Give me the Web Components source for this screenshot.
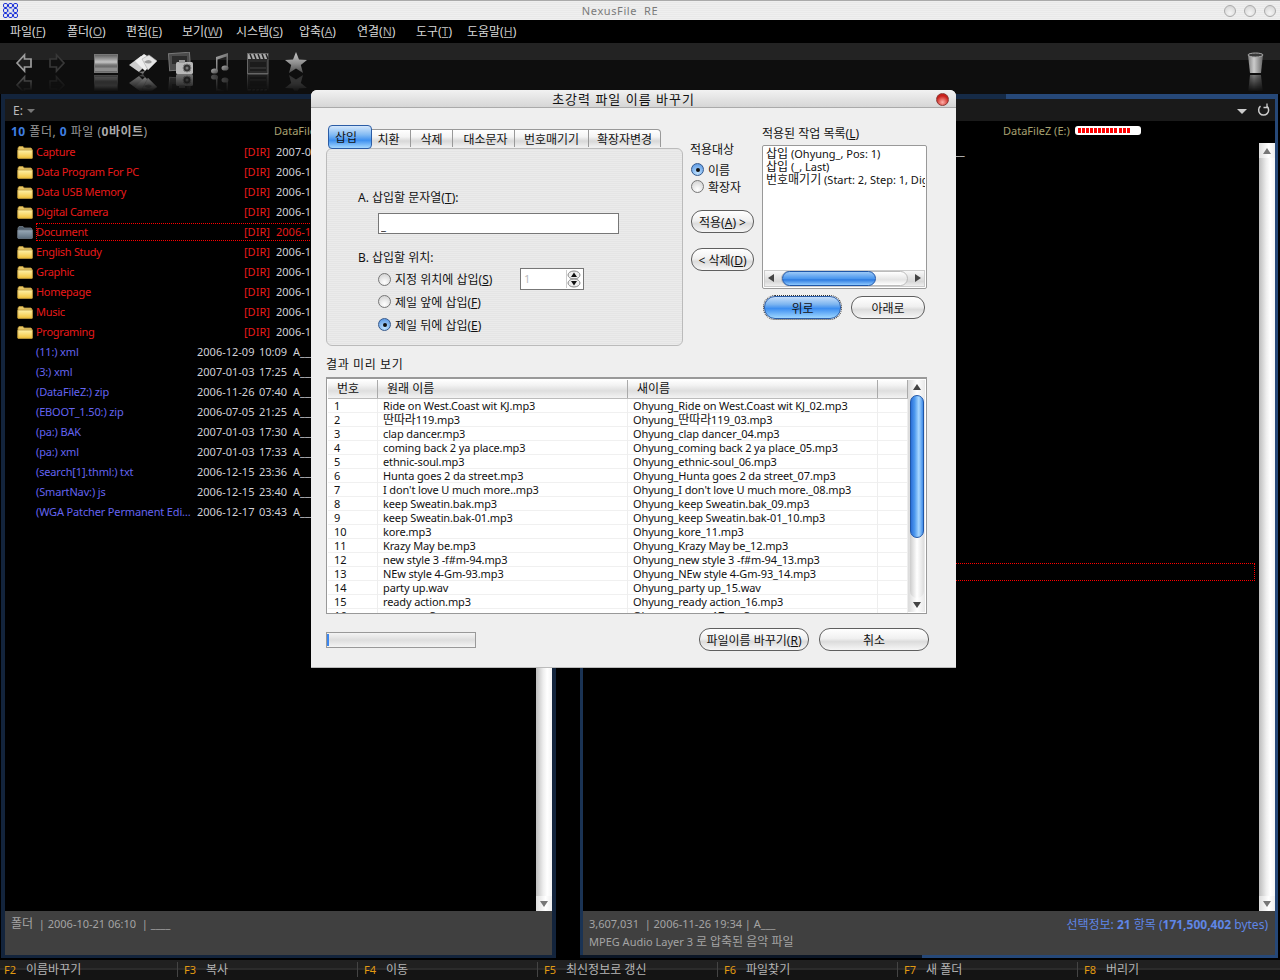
<!DOCTYPE html>
<html lang="ko"><head><meta charset="utf-8"><title>NexusFile RE</title>
<style>
html,body{margin:0;padding:0;background:#000;height:980px;overflow:hidden}
body{font:11px/14px "Noto Sans","Noto Sans CJK KR",sans-serif;position:relative;display:flex;flex-direction:column;width:1280px}
</style></head><body>
<x-titlebar>NexusFile  RE</x-titlebar>
<x-menubar></x-menubar>
<x-toolbar></x-toolbar>
<x-panes></x-panes>
<x-fnbar></x-fnbar>
<x-rename-dialog></x-rename-dialog>
<script>
const FONT='"Noto Sans","Noto Sans CJK KR",sans-serif';
function def(name,css,html,init){
  customElements.define(name,class extends HTMLElement{
    connectedCallback(){
      if(this.shadowRoot)return;
      const r=this.attachShadow({mode:'open'});
      r.innerHTML='<style>'+css+'</style>'+(typeof html==='function'?html(this):html);
      if(init)init(this,r);
    }
  });
}
/* ---------- title bar ---------- */
def('x-titlebar',`:host{display:flex;align-items:center;height:20px;box-sizing:border-box;border-top:1px solid #aaa;
 background:repeating-linear-gradient(0deg,#efefef 0 1px,#e9e9e9 1px 2px);color:#7a7a7a;font:11px "Noto Sans",sans-serif;letter-spacing:.6px;position:relative;padding:0 4px 0 3px}
 svg{display:block} .t{flex:1;text-align:center;padding-left:6px;white-space:pre}
 .b{width:10px;height:10px;border-radius:50%;border:1px solid #aaa;background:radial-gradient(circle at 50% 70%,#f5f5f5,#d0d0d0);margin-left:8px}`,
 ()=>`<svg width="15" height="15" viewBox="0 0 15 15" fill="none" stroke="#1a2fd8">${[0,5,10].map(x=>[0,5,10].map(y=>`<rect x="${x+.5}" y="${y+.5}" width="4" height="4" rx="1.4" ${x==5&&y==5?'stroke="#8fa0e8"':''}/>`).join('')).join('')}</svg>
 <span class="t"><slot></slot></span><i class="b"></i><i class="b"></i><i class="b"></i>`);
/* ---------- menu ---------- */
def('x-menubar',`:host{display:flex;height:23px;align-items:center;background:#000;color:#d8d8d8;padding-left:10px;font-size:12px;font-family:${FONT}}
 span{display:block;white-space:nowrap} u{color:#aaa}`,
 ()=>[['파일','F',57],['폴더','O',59],['편집','E',56],['보기','W',54],['시스템','S',63],['압축','A',58],['연결','N',59],['도구','T',51],['도움말','H',60]]
 .map(m=>`<span style="width:${m[2]}px">${m[0]}(<u>${m[1]}</u>)</span>`).join(''));
/* ---------- toolbar ---------- */
const ICONS={
 back:[18,`<path d="M2 11 L9.5 3 V7 H16 V15 H9.5 V19 Z" fill="#1c1c1c" stroke="#9c9c9c" stroke-width="1.7"/>`],
 fwd:[18,`<path d="M16 11 L8.5 3 V7 H2 V15 H8.5 V19 Z" fill="#111" stroke="#383838" stroke-width="1.7"/>`],
 card:[24,`<defs><linearGradient id="g" x1="0" y1="0" x2="0" y2="1"><stop offset="0" stop-color="#5c5c5c"/><stop offset=".42" stop-color="#c4c4c4"/><stop offset=".58" stop-color="#777"/><stop offset="1" stop-color="#444"/></linearGradient></defs><rect x=".5" y="2.5" width="23" height="18" fill="url(#g)" stroke="#777"/><rect x="1" y="15.5" width="22" height="4" fill="#8e8e8e"/>`],
 files:[30,`<path d="M1 13 L13 4 L22 9 L11 20 Z" fill="#ccc"/><path d="M7 9 L16 2 L27 9 L17 19 Z" fill="#eee"/><path d="M14 7 L21 3 L29 9 L20 18 Z" fill="#e4e4e4" stroke="#aaa" stroke-width=".6"/><path d="M16 10 Q21 6 24 10 Q21 13 16 10" fill="#999"/><path d="M11 20 L17 19 L15 22 Z" fill="#777"/>`],
 cam:[26,`<rect x="1" y="1" width="21" height="17" fill="#4d4d4d" stroke="#777" transform="rotate(-4 11 9)"/><rect x="4" y="4" width="15" height="8" fill="#2c2c2c"/><rect x="8" y="10" width="17" height="12" rx="1.5" fill="#b8b8b8"/><rect x="11" y="8" width="6" height="3" fill="#999"/><circle cx="19" cy="16" r="4" fill="#333" stroke="#888"/><circle cx="19" cy="16" r="1.5" fill="#777"/>`],
 music:[20,`<defs><linearGradient id="g" x1="0" y1="0" x2="1" y2="1"><stop offset="0" stop-color="#aaa"/><stop offset="1" stop-color="#484848"/></linearGradient></defs><path d="M6 5 L18 1 V16 H16.5 V4.5 L7.5 7.5 V19 H6 Z" fill="url(#g)"/><ellipse cx="4.5" cy="19" rx="3.5" ry="2.6" fill="url(#g)"/><ellipse cx="15" cy="16" rx="3.5" ry="2.6" fill="url(#g)"/>`],
 clap:[22,`<rect x=".5" y="1.5" width="20.5" height="20" fill="#2a2a2a" stroke="#666"/><path d="M1 2h20v5H1z" fill="#aaa"/><path d="M3 2l2 5M7 2l2 5M11 2l2 5M15 2l2 5M19 2l2 5" stroke="#222" stroke-width="1.5"/><rect x="3" y="10" width="16" height="9" fill="#1c1c1c"/><path d="M3 16h16" stroke="#444"/>`],
 star:[22,`<defs><linearGradient id="g" x1="0" y1="0" x2="0" y2="1"><stop offset="0" stop-color="#c8c8c8"/><stop offset=".55" stop-color="#8c8c8c"/><stop offset="1" stop-color="#4a4a4a"/></linearGradient></defs><path d="M11 0 L14 7.5 L22 8 L15.8 13 L18 21 L11 16.6 L4 21 L6.2 13 L0 8 L8 7.5 Z" fill="url(#g)"/>`],
 trash:[17,`<defs><linearGradient id="g" x1="0" y1="0" x2="1" y2="0"><stop offset="0" stop-color="#808080"/><stop offset=".4" stop-color="#ccc"/><stop offset="1" stop-color="#666"/></linearGradient></defs><path d="M1 3 L3 21 H14 L16 3 Z" fill="url(#g)"/><ellipse cx="8.5" cy="3" rx="7.5" ry="2" fill="#3a3a3a" stroke="#aaa"/>`]
};
def('x-tool',`:host{display:block;position:relative;height:40px;width:var(--w);flex:none}
 svg{display:block;position:absolute;left:0;top:0}
 svg.r{top:22px;transform:scaleY(-1);-webkit-mask-image:linear-gradient(0deg,rgba(0,0,0,.6),transparent 80%);mask-image:linear-gradient(0deg,rgba(0,0,0,.6),transparent 80%)}`,
 h=>{const k=ICONS[h.getAttribute('kind')];h.style.setProperty('--w',k[0]+'px');const s=`width="${k[0]}" height="22" viewBox="0 0 ${k[0]} 22"`;return `<svg ${s}>${k[1]}</svg><svg class="r" ${s}>${k[1]}</svg>`;});
def('x-toolbar',`:host{display:flex;height:51px;box-sizing:border-box;padding:9px 16px 0 15px;overflow:hidden;background:linear-gradient(180deg,#232323 0,#232323 17px,#0e0e0e 17px,#0e0e0e 100%)}
 .s{margin-left:auto}`,
 ()=>[['back',0],['fwd',15],['card',28],['files',10],['cam',10],['music',16],['clap',17],['star',16]].map(a=>`<x-tool kind="${a[0]}" style="margin-left:${a[1]}px"></x-tool>`).join('')+`<x-tool kind="trash" class="s"></x-tool>`);
/* ---------- small parts ---------- */
def('x-folder',`:host{display:block;width:16px;height:14px} svg{display:block}`,h=>{const g=h.hasAttribute('open');const a=g?'#9aaab8':'#fff2a8',b=g?'#5e7080':'#f2c23c',e=g?'#6d7a86':'#b8953a';
 return `<svg width="16" height="14" viewBox="0 0 16 14"><defs><linearGradient id="g" x1="0" y1="0" x2="0" y2="1"><stop offset="0" stop-color="${a}"/><stop offset="1" stop-color="${b}"/></linearGradient></defs><path d="M1 3 L2 1.5 H6 L7 3 H14 L15 4 V13 H1 Z" fill="${g?'#51606e':'#e7c766'}" stroke="${e}" stroke-width=".8"/><rect x=".8" y="5" width="14.6" height="8.4" rx=".5" fill="url(#g)" stroke="${e}" stroke-width=".8"/></svg>`});
def('x-vscroll',`:host{display:flex;flex-direction:column;justify-content:space-between;width:16px;flex:none;box-sizing:border-box;margin-top:1px;background:linear-gradient(90deg,#bcbcbc,#eeeeee 45%,#fff 70%,#f4f4f4)}
 b{display:flex;align-items:center;justify-content:center;height:15px;background:linear-gradient(90deg,#ddd,#fff 60%,#eee)} i{width:0;height:0;border:4px solid transparent;border-top:0;border-bottom:6px solid #777} b:last-child i{border-bottom:0;border-top:6px solid #777}`,
 `<b><i></i></b><b><i></i></b>`);
def('x-drive',`:host{display:flex;align-items:center;gap:5px;color:#a8a070;font:11px ${FONT};white-space:nowrap}
 .bar{width:66px;height:9px;box-sizing:border-box;background:#fff;border-radius:3px;padding:2px 3px}
 .f{height:5px;width:52px;background:repeating-linear-gradient(90deg,#f00 0 3px,#fff 3px 4.05px)}`,
 `<span><slot></slot></span><div class="bar"><div class="f"></div></div>`);
def('x-file-row',`:host{display:block;height:20px;position:relative}
 .r{display:grid;height:18px;align-items:center;white-space:nowrap;font:11px ${FONT};color:#d0d0d8;padding-left:12px;grid-template-columns:19px 208px 32px 1fr}
 .r.f{grid-template-columns:19px 161px 62px 34px 1fr}
 .n{color:#e81a1a;letter-spacing:-.3px} .f .n{color:#6464f0;grid-column:2;letter-spacing:-.15px} .d{color:#e81a1a} .foc .t{color:#e81a1a}
 x-folder{margin-top:2px}
 .o{position:absolute;left:31px;right:0;top:1px;height:16px;border:1px dotted #f00;border-right:0}`,
 h=>{const n=h.getAttribute('name'),t=h.getAttribute('date'),foc=h.hasAttribute('focus');
 if(h.hasAttribute('dir'))return `<div class="r ${foc?'foc':''}"><x-folder ${foc?'open':''}></x-folder><span class="n">${n}</span><span class="d">[DIR]</span><span class="t">${t}</span></div>${foc?'<div class="o"></div>':''}`;
 const p=t.split(' ');return `<div class="r f"><span></span><span class="n">${n}</span><span>${p[0]}</span><span>${p[1]}</span><span>A___</span></div>`;});
/* ---------- panes ---------- */
def('x-pane',`:host{display:flex;flex-direction:column;box-sizing:border-box;background:var(--b);position:relative}
 .h{height:22px;background:#1a1a1a;display:flex;align-items:center;color:#bbb;font:12px ${FONT};padding:0 5px 0 8px;flex:none}
 .i{height:21px;display:flex;align-items:center;justify-content:space-between;background:#000;flex:none;color:#999;font:11px ${FONT};padding:0 0 2px 6px;box-sizing:border-box}
 .m{flex:1;display:flex;background:#000;min-height:0;overflow:hidden}
 .l{flex:1;min-width:0;overflow:hidden;position:relative}
 .s{height:44px;flex:none;background:#404040;color:#a4a4a4;font:11px/18px ${FONT};padding:4px 7px 0 6px;box-sizing:border-box;white-space:nowrap}
 ::slotted([slot=list]){display:block}`,
 `<div class="h"><slot name="head"></slot></div><div class="i"><slot name="info"></slot></div><div class="m"><div class="l"><slot name="list"></slot></div><x-vscroll></x-vscroll></div><div class="s"><slot name="status"></slot></div>`);
def('x-panes',`:host{display:grid;grid-template-columns:555px 698px;column-gap:24px;padding-left:1px;height:864px;flex:none;font:11px ${FONT}}
 x-pane.a{--b:#13243c;padding:5px 4px 3px 4px}
 x-pane.b{--b:linear-gradient(90deg,#152a46 0,#152a46 61%,#264878 61%) top/100% 5px no-repeat,linear-gradient(90deg,#0b1626 0,#0b1626 49%,#264878 49%) bottom/100% 3px no-repeat,linear-gradient(90deg,#1a3354 0,#1a3354 1%,#264878 1%) center/100% 100% no-repeat;padding:5px 3px 3px 3px}
 .hd{display:flex;align-items:center;gap:4px;flex:1} .ar{width:0;height:0;border:4px solid transparent;border-bottom:0;border-top:4px solid #777;margin-top:2px}
 .ar.w{border-width:5px 5px 0;border-top-color:#ccc;border-bottom:0}
 .cnt b{color:#3f7fe0;font-family:"Noto Sans"} .cnt{color:#999;white-space:nowrap;font-size:12px;letter-spacing:.5px;flex:0 0 263px} .cnt .z{color:#aaa;font-weight:700}
 .bl{color:#5f86e6;float:right;font-size:12px;line-height:20px} .bl b{font-weight:700}
 .k{font-size:12px}
 .focR{position:absolute;left:0;right:4px;top:421px;height:16px;border:1px dotted #f00}
 .ul{position:absolute;left:360px;top:0;height:20px;line-height:18px;color:#ddd}`,
 ()=>`<x-pane class="a">
  <div slot="head" class="hd"><span>E:</span><i class="ar"></i></div>
  <div slot="info" style="display:flex;width:100%;align-items:center"><span class="cnt"><b>10</b> 폴더, <b>0</b> 파일 (<span class="z">0바이트</span>)</span><x-drive>DataFileZ (E:)</x-drive></div>
  <div slot="list">
  ${[['Capture','2007-01-03'],['Data Program For PC','2006-12-15'],['Data USB Memory','2006-12-09'],['Digital Camera','2006-12-01'],['Document','2006-10-21',1],['English Study','2006-10-18'],['Graphic','2006-10-12'],['Homepage','2006-12-17'],['Music','2006-12-05'],['Programing','2006-11-26']]
   .map(d=>`<x-file-row dir name="${d[0]}" date="${d[1]}" ${d[2]?'focus':''}></x-file-row>`).join('')}
  ${[['(11:) xml','2006-12-09 10:09'],['(3:) xml','2007-01-03 17:25'],['(DataFileZ:) zip','2006-11-26 07:40'],['(EBOOT_1.50:) zip','2006-07-05 21:25'],['(pa:) BAK','2007-01-03 17:30'],['(pa:) xml','2007-01-03 17:33'],['(search[1].thml:) txt','2006-12-15 23:36'],['(SmartNav:) js','2006-12-15 23:40'],['(WGA Patcher Permanent Edi…','2006-12-17 03:43']]
   .map(d=>`<x-file-row name="${d[0]}" date="${d[1]}"></x-file-row>`).join('')}
  </div>
  <div slot="status"><span class="k">폴더</span> &nbsp;| 2006-10-21 06:10 &nbsp;| ____</div>
 </x-pane>
 <x-pane class="b">
  <div slot="head" class="hd" style="justify-content:flex-end;gap:10px"><i class="ar w"></i><svg width="13" height="14" viewBox="0 0 13 14" fill="none" stroke="#ccc" stroke-width="1.5" style="display:block"><path d="M3.5 3.2 A5 5 0 1 0 10 3.4"/><path d="M10 .5 V4.5 H6.5" stroke-width="1.3"/></svg></div>
  <div slot="info" style="display:flex;width:100%;justify-content:flex-start;padding-left:414px"><x-drive>DataFileZ (E:)</x-drive></div>
  <div slot="list" style="position:relative;height:760px"><span class="ul">A___</span><div class="focR"></div></div>
  <div slot="status"><span class="bl">선택정보: <b>21</b> 항목 (<b>171,500,402</b> bytes)</span>3,607,031 &nbsp;| 2006-11-26 19:34 | A___<br>MPEG Audio Layer 3 <span class="k">로 압축된 음악 파일</span></div>
 </x-pane>`);
/* ---------- function keys ---------- */
def('x-fnbar',`:host{display:flex;height:20px;margin-top:2px;background:linear-gradient(180deg,#202020 0,#202020 8px,#2b2b2b 8px,#2b2b2b 10px,#141414 10px);font:12px ${FONT};color:#b5b5b5;padding-left:4px;box-sizing:border-box;flex:none}
 div{width:180px;flex:none;box-sizing:border-box;border-left:1px solid #444;padding-left:6px;margin:2px 0 3px;line-height:15px;white-space:nowrap}
 div:first-of-type{width:173px;border:0;padding:0} b{color:#e29b12;font-weight:400;font-size:11px;margin-right:10px}`,
 ()=>[['F2','이름바꾸기'],['F3','복사'],['F4','이동'],['F5','최신정보로 갱신'],['F6','파일찾기'],['F7','새 폴더'],['F8','버리기']].map(a=>`<div><b>${a[0]}</b>${a[1]}</div>`).join(''));
/* ---------- dialog controls ---------- */
def('x-pill',`:host{display:flex;align-items:center;justify-content:center;box-sizing:border-box;height:23px;border:1px solid #5f5f5f;border-radius:11px;background:linear-gradient(180deg,#fff 0,#f0f0f0 45%,#dcdcdc 60%,#f6f6f6 100%);font:12px ${FONT};color:#111;white-space:nowrap}
 :host([primary]){background:linear-gradient(180deg,#c6defa 0,#7db5f0 35%,#3d8ef0 55%,#9ed6ff 100%);border-color:#2a5da8;outline:1px dotted #333;outline-offset:0}`,`<span><slot></slot></span>`);
def('x-radio',`:host{display:flex;align-items:center;gap:4px;font:12px ${FONT};color:#111;white-space:nowrap;height:18px}
 i{display:block;width:11px;height:11px;border-radius:50%;border:1px solid #777;background:radial-gradient(circle at 50% 75%,#fff,#ccc);flex:none;position:relative}
 :host([on]) i{background:radial-gradient(circle at 50% 80%,#bfe2ff,#4e8fe0);border-color:#35598c}
 :host([on]) i::after{content:"";position:absolute;left:3.5px;top:3.5px;width:4px;height:4px;border-radius:50%;background:#111}`,`<i></i><span><slot></slot></span>`);
def('x-tab',`:host{display:flex;align-items:center;justify-content:center;height:18px;box-sizing:border-box;border:1px solid #999;border-left:0;background:linear-gradient(180deg,#fff,#f4f4f4 40%,#d8d8d8 65%,#f0f0f0);font:12px ${FONT};color:#111;white-space:nowrap;border-bottom:0}
 :host(:last-child){border-radius:0 4px 0 0}
 :host([on]){height:24px;margin-top:-4px;border:1px solid #2b5ca5;border-radius:4px;background:linear-gradient(180deg,#d4e7fb,#82baf3 40%,#3e90ef 65%,#a5d8ff);position:relative;z-index:1;align-items:flex-start;padding:2px 8px 0 0;margin-bottom:-2px}`,`<slot></slot>`);
def('x-spin',`:host{display:flex;width:64px;height:22px;box-sizing:border-box;border:1px solid #777;background:#fff;color:#bbb;font:11px/20px ${FONT};padding-left:3px;justify-content:space-between}
 svg{display:block;margin:1px 2px 0 0}`,
 `<slot></slot><svg width="15" height="18" viewBox="0 0 15 18"><path d="M.5 0V18" stroke="#ccc"/><ellipse cx="8" cy="5" rx="6" ry="4" fill="#eee" stroke="#888"/><ellipse cx="8" cy="13" rx="6" ry="4" fill="#eee" stroke="#888"/><path d="M8 2.5 L11 7 H5Z M8 15.5 L11 11 H5Z" fill="#111"/></svg>`);
def('x-action-list',`:host{display:flex;flex-direction:column;box-sizing:border-box;width:165px;height:144px;border:1px solid #999;background:#fff;padding:1px;font:11px/13px ${FONT};color:#111;border-radius:2px}
 .t{flex:1;overflow:hidden;white-space:nowrap;padding:0 0 0 2px}
 .t div{height:13px} .k{font-size:12px}
 .h{height:17px;flex:none;display:flex;align-items:center;background:linear-gradient(180deg,#f8f8f8,#d8d8d8 70%,#eee);position:relative;border:1px solid #ccc;box-sizing:border-box}
 i{width:0;height:0;border:4px solid transparent;position:absolute;top:3px}
 .a{left:3px;border-left:0;border-right:6px solid #444}.b{right:3px;border-right:0;border-left:6px solid #444}
 .tr{position:absolute;left:16px;right:16px;top:0;bottom:0;border-radius:8px;background:linear-gradient(180deg,#fff,#e4e4e4 60%,#fff);border:1px solid #bbb;box-sizing:border-box}
 .th{position:absolute;left:17px;width:94px;top:0;bottom:0;border-radius:8px;background:linear-gradient(180deg,#9cc9f7,#4c97ee 50%,#2e7be0 60%,#8fcaff);border:1px solid #1f56a8;box-sizing:border-box}`,
 `<div class="t"><div><span class="k">삽입</span> (Ohyung_, Pos: 1)</div><div><span class="k">삽입</span> (_, Last)</div><div><span class="k">번호매기기</span> (Start: 2, Step: 1, Digits: 2)</div></div><div class="h"><div class="tr"></div><div class="th"></div><i class="a"></i><i class="b"></i></div>`);
const NAMES=['Ride on West.Coast wit KJ','딴따라119','clap dancer','coming back 2 ya place','ethnic-soul','Hunta goes 2 da street',"I don't love U much more.",'keep Sweatin.bak','keep Sweatin.bak-01','kore','Krazy May be','new style 3 -f#m-94','NEw style 4-Gm-93','party up','ready action','sugar'];
const kr=s=>s.replace(/[가-힣]+/g,m=>`<b>${m}</b>`);
def('x-preview',`:host{display:block;width:601px;height:237px;box-sizing:border-box;border:1px solid #999;border-top-width:2px;background:#fff;padding:1px;font:11px/14px ${FONT};color:#111;position:relative;overflow:hidden}
 .g{display:grid;grid-template-columns:50px 250px 250px 30px}
 .hd{height:19px;background:linear-gradient(180deg,#fff,#f2f2f2 30%,#dedede 60%,#f3f3f3);border-bottom:1px solid #bbb;box-sizing:border-box;font-size:12px;line-height:17px;margin-right:17px}
 .hd span{padding-left:9px;border-right:1px solid #aaa}
 .bd{height:214px;overflow:hidden;margin-right:17px}
 .r{height:14px;box-sizing:border-box;border-bottom:1px solid #f0f0f0;white-space:nowrap;letter-spacing:-.13px}
 .r b{font-weight:400;font-size:12px}
 .r span{padding-left:5px;border-right:1px solid #eee;overflow:hidden;line-height:14px;height:14px}
 .r span:first-child{padding-left:6px}
 .sb{position:absolute;right:1px;top:1px;bottom:1px;width:17px;background:linear-gradient(90deg,#ddd,#fff 50%,#e8e8e8);border-left:1px solid #ddd;box-sizing:border-box}
 .up,.dn{position:absolute;left:4px;width:0;height:0;border:4px solid transparent}
 .up{top:4px;border-top:0;border-bottom:6px solid #444}.dn{bottom:4px;border-bottom:0;border-top:6px solid #444}
 .th{position:absolute;left:1px;right:1px;top:15px;height:143px;border-radius:7px;background:linear-gradient(90deg,#2c70d8,#4c98ee 30%,#a9d8ff 65%,#3f8be8);border:1px solid #1f56a8;box-sizing:border-box}
 .tk{position:absolute;left:1px;right:1px;top:150px;height:68px;border-radius:0 0 7px 7px;background:linear-gradient(90deg,#ccc,#fff 50%,#ddd);}`,
 ()=>`<div class="g hd"><span>번호</span><span>원래 이름</span><span>새이름</span><span></span></div><div class="bd">${NAMES.map((n,i)=>{
   const ext=i==13?'.wav':'.mp3',num=String(i+2).padStart(2,'0');
   let orig=n+ext,nw='Ohyung_'+n+'_'+num+ext;
   if(i==6){orig="I don't love U much more..mp3"}
   return `<div class="g r"><span>${i+1}</span><span>${kr(orig)}</span><span>${kr(nw)}</span><span></span></div>`}).join('')}</div>
   <div class="sb"><div class="tk"></div><div class="th"></div><i class="up"></i><i class="dn"></i></div>`);
def('x-rename-dialog',`:host{position:absolute;left:311px;top:90px;width:645px;height:578px;display:flex;flex-direction:column;background:#efefef;border-radius:6px 6px 0 0;border-bottom:1px solid #bbb;font:12px ${FONT};color:#111;box-sizing:border-box}
 .tb{height:18px;flex:none;display:flex;align-items:center;justify-content:center;position:relative;border-radius:6px 6px 0 0;background:linear-gradient(180deg,#f2f2f2,#d6d6d6);border-bottom:1px solid #aaa;font-size:13px;letter-spacing:1px;padding-right:20px;box-sizing:border-box}
 .cl{position:absolute;right:7px;top:3px;width:11px;height:11px;border-radius:50%;background:radial-gradient(circle at 50% 75%,#ffb0a8,#c8201a 65%);border:1px solid #8a3a36}
 .top{display:grid;grid-template-columns:357px 65px 165px;column-gap:7px;margin:18px 0 0 15px;align-items:start}
 .tabs{display:flex;padding:3px 0 0 2px;box-sizing:border-box;height:22px}
 .tabs x-tab:nth-child(1){width:44px;border-left:1px solid #2b5ca5}
 .pg{height:198px;box-sizing:border-box;border:1px solid #bbb;border-radius:6px;background:repeating-linear-gradient(0deg,#ebebeb 0 1px,#e5e5e5 1px 2px);padding:41px 0 0 31px}
 .lab{line-height:16px;white-space:nowrap}
 input{display:block;width:241px;height:21px;box-sizing:border-box;border:1px solid #777;margin:7px 0 0 20px;font:11px ${FONT};padding:4px 2px 0;background:#fff;color:#111;outline:none;border-radius:0}
 .pos{margin:2px 0 0 20px;display:flex;flex-direction:column}
 .p1{display:flex;align-items:center;height:22px}.p1 x-radio{width:132px}.p1 x-spin{margin-left:10px}
 .p2{height:23px;display:flex;align-items:center}
 .mid{display:flex;flex-direction:column;padding-top:16px}
 .mid .cap{margin:0 0 3px 0;white-space:nowrap;line-height:16px}
 .mid x-radio{height:17px;margin-left:1px}
 .mid x-pill{margin:15px 2px 0 1px;width:63px}
 .mid x-pill+x-pill{margin-top:15px}
 .rt .cap{line-height:16px;height:19px;white-space:nowrap}
 .btns{display:flex;margin:7px 0 0 2px;gap:10px}
 .btns x-pill:first-child{width:77px}.btns x-pill:last-child{width:74px}
 .pvl{margin:11px 0 4px 15px;line-height:16px;letter-spacing:.6px}
 .pv{margin-left:15px}
 .bot{display:flex;align-items:flex-start;margin:14px 0 0 15px}
 .prog{width:150px;height:16px;margin-top:4px;box-sizing:border-box;border:1px solid #999;background:linear-gradient(180deg,#f4f4f4,#dedede 50%,#f4f4f4);position:relative}
 .prog i{position:absolute;left:0;top:1px;bottom:1px;width:2px;background:#3b86ee}
 .bot x-pill{width:110px}.bot x-pill:nth-child(2){margin-left:223px}.bot x-pill:nth-child(3){margin-left:10px}`,
 `<div class="tb">초강력 파일 이름 바꾸기<i class="cl"></i></div>
 <div class="top">
  <div>
   <div class="tabs"><x-tab on>삽입</x-tab><x-tab style="width:39px;padding-right:5px;box-sizing:border-box">치환</x-tab><x-tab style="width:42px">삭제</x-tab><x-tab style="width:62px;padding-left:4px;box-sizing:border-box">대소문자</x-tab><x-tab style="width:74px">번호매기기</x-tab><x-tab style="width:72px">확장자변경</x-tab></div>
   <div class="pg">
    <div class="lab">A. 삽입할 문자열(<u>T</u>):</div>
    <input value="_" aria-label="삽입할 문자열">
    <div class="lab" style="margin-top:16px">B. 삽입할 위치:</div>
    <div class="pos">
     <div class="p1"><x-radio>지정 위치에 삽입(<u>S</u>)</x-radio><x-spin>1</x-spin></div>
     <div class="p2"><x-radio>제일 앞에 삽입(<u>F</u>)</x-radio></div>
     <div class="p2"><x-radio on>제일 뒤에 삽입(<u>E</u>)</x-radio></div>
    </div>
   </div>
  </div>
  <div class="mid">
   <div class="cap">적용대상</div>
   <x-radio on>이름</x-radio><x-radio>확장자</x-radio>
   <x-pill>적용(<u>A</u>) &gt;</x-pill><x-pill>&lt; 삭제(<u>D</u>)</x-pill>
  </div>
  <div class="rt">
   <div class="cap">적용된 작업 목록(<u>L</u>)</div>
   <x-action-list></x-action-list>
   <div class="btns"><x-pill primary>위로</x-pill><x-pill>아래로</x-pill></div>
  </div>
 </div>
 <div class="pvl">결과 미리 보기</div>
 <x-preview class="pv"></x-preview>
 <div class="bot"><div class="prog"><i></i></div><x-pill>파일이름 바꾸기(<u>R</u>)</x-pill><x-pill>취소</x-pill></div>`);
</script>
</body></html>
